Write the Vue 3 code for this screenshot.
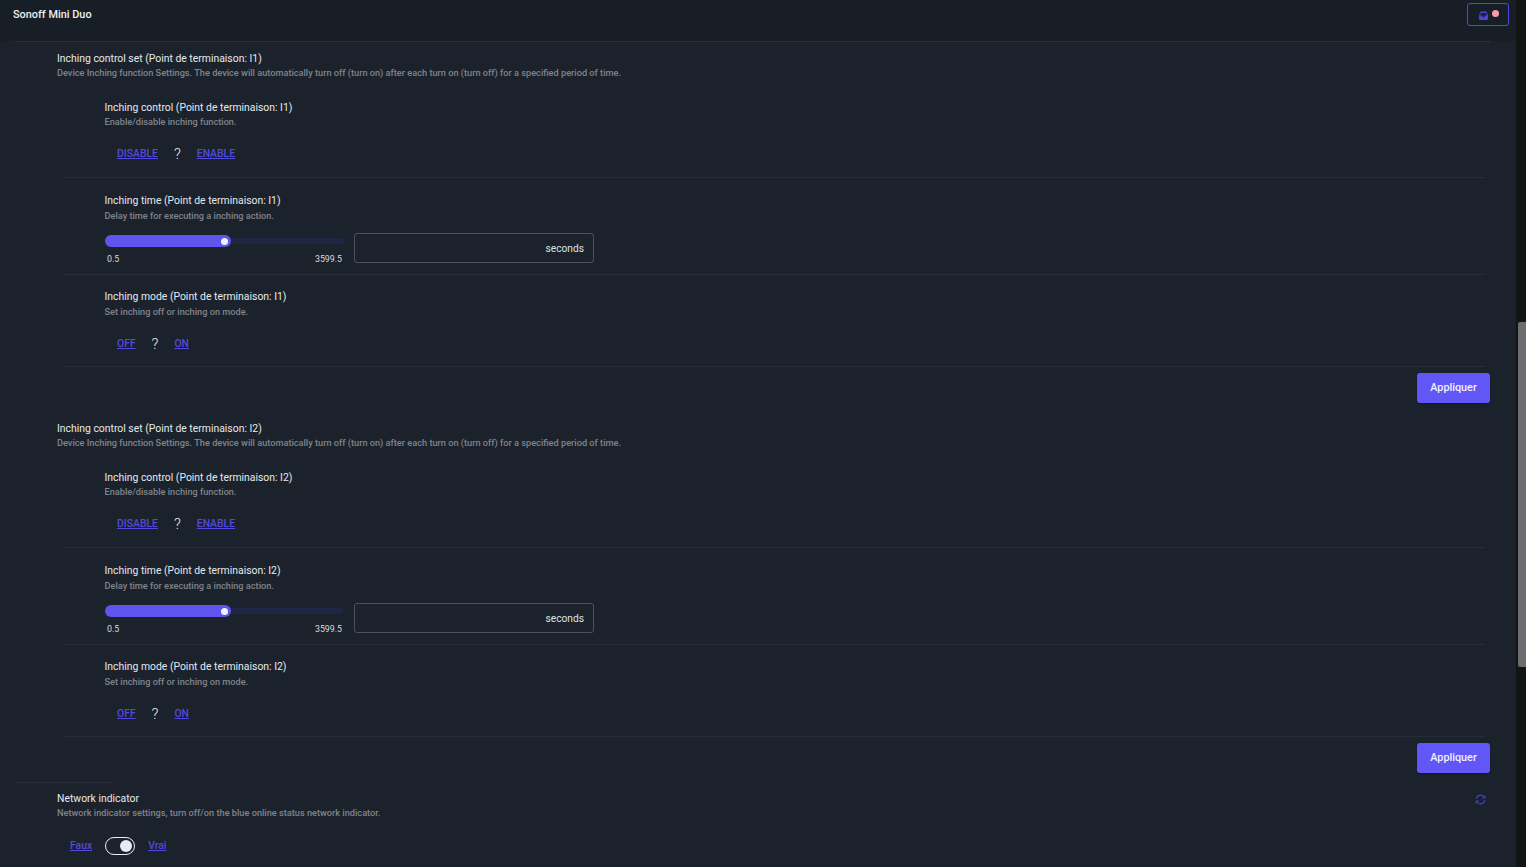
<script setup>
const sections = ['I1', 'I2']
</script>

<template>
  <div class="page">
    <div class="content">
      <header class="topbar">
        <span class="device">Sonoff Mini Duo</span>
        <button class="status">
          <svg width="11" height="11" viewBox="0 0 11 11" class="tray">
            <path d="M2.5 1.5h6l1.5 4v3a1.5 1.5 0 0 1-1.5 1.5h-6A1.5 1.5 0 0 1 1 8.500v-3z" fill="#4c46d8" />
            <path d="M2.800 3h5.400l.8 2.600H7L6.400 7H4.600L4 5.600H2z" fill="#1d2130" />
          </svg>
          <span class="dot"></span>
        </button>
      </header>
      <div class="rule-top"></div>

      <section v-for="id in sections" :key="id" class="group">
        <h2 class="title">Inching control set (Point de terminaison: {{ id }})</h2>
        <p class="desc">Device Inching function Settings. The device will automatically turn off (turn on) after each turn on (turn off) for a specified period of time.</p>

        <div class="subs">
          <div class="sub sub-control">
            <h3 class="title">Inching control (Point de terminaison: {{ id }})</h3>
            <p class="desc">Enable/disable inching function.</p>
            <div class="choice">
              <a class="link">DISABLE</a>
              <span class="unknown">?</span>
              <a class="link">ENABLE</a>
            </div>
          </div>

          <div class="sub sub-time">
            <h3 class="title">Inching time (Point de terminaison: {{ id }})</h3>
            <p class="desc">Delay time for executing a inching action.</p>
            <div class="controls">
              <div class="slider">
                <div class="track">
                  <div class="fill"><span class="handle"></span></div>
                </div>
                <div class="range"><span>0.5</span><span>3599.5</span></div>
              </div>
              <div class="field"><span>seconds</span></div>
            </div>
          </div>

          <div class="sub sub-mode">
            <h3 class="title">Inching mode (Point de terminaison: {{ id }})</h3>
            <p class="desc">Set inching off or inching on mode.</p>
            <div class="choice">
              <a class="link">OFF</a>
              <span class="unknown">?</span>
              <a class="link">ON</a>
            </div>
          </div>
        </div>

        <div class="actions"><button class="apply">Appliquer</button></div>
      </section>

      <section class="network">
        <div class="rule-short"></div>
        <div class="network-head">
          <div>
            <h2 class="title">Network indicator</h2>
            <p class="desc">Network indicator settings, turn off/on the blue online status network indicator.</p>
          </div>
          <svg class="refresh" width="11" height="11" viewBox="0 0 12 12" fill="none" stroke="#4640c0" stroke-width="1.200">
            <path d="M1.500 5.500A4.500 4.500 0 0 1 9.500 3L10.500 4" />
            <path d="M10.800 1.300v3h-3" />
            <path d="M10.500 6.500A4.500 4.500 0 0 1 2.500 9L1.500 8" />
            <path d="M1.200 10.700v-3h3" />
          </svg>
        </div>
        <div class="toggle-row">
          <a class="link">Faux</a>
          <span class="toggle"><span class="knob"></span></span>
          <a class="link">Vrai</a>
        </div>
      </section>
    </div>
    <div class="scrollbar"><div class="thumb"></div></div>
  </div>
</template>

<style>
html, body { margin: 0; background: #1b222c; }
</style>

<style scoped>
.page {
  display: flex;
  width: 1526px;
  height: 867px;
  overflow: hidden;
  background: #1b222c;
  font-family: Roboto, "Noto Sans", sans-serif;
  color: #e6e9ec;
}
.content { flex: 1; min-width: 0; }
.topbar {
  height: 41px;
  box-sizing: border-box;
  padding: 3px 7px 0 13px;
  display: flex;
  justify-content: space-between;
  align-items: flex-start;
  background: #181e26;
}
.device { font-size: 10.900px; font-weight: 500; line-height: 23px; color: #eef0f2; }
.status {
  width: 42px;
  height: 23px;
  padding: 0 10px;
  display: flex;
  align-items: center;
  justify-content: space-between;
  background: transparent;
  border: 1px solid #4f48d8;
  border-radius: 3px;
}
.tray { display: block; margin-top: 2px; }
.dot { width: 7px; height: 7px; border-radius: 50%; background: #f79aaa; margin-top: -3px; margin-right: -1px; }
.rule-top { height: 1px; margin: 0 26px 0 15px; background: #2a313b; }

.group { padding: 9px 26px 0 57px; margin-bottom: 9px; }
.title { margin: 0; font-size: 10.400px; font-weight: 400; line-height: 15px; color: #e6e9ec; }
.desc { margin: 0; font-size: 9.200px; font-weight: 500; line-height: 14px; color: #80848b; }

.subs { margin-left: 7px; margin-right: 5px; }
.sub { padding-left: 40.500px; border-bottom: 1px solid #262d37; }
.sub-control { padding-top: 20px; padding-bottom: 13px; }
.sub-time { padding-top: 15px; padding-bottom: 10px; }
.sub-time .title, .sub-mode .title { margin-bottom: 1px; }
.sub-mode { padding-top: 14px; padding-bottom: 12px; }

.choice {
  display: flex;
  align-items: center;
  height: 20px;
  margin-top: 15px;
  margin-left: 12.500px;
  gap: 16px;
}
.link {
  font-size: 10.400px;
  font-weight: 500;
  color: #524adf;
  text-decoration: underline;
  line-height: 20px;
}
.unknown { font-size: 15px; font-weight: 300; color: #e6e9ec; line-height: 20px; }

.controls { display: flex; gap: 10px; margin-top: 10px; align-items: flex-start; }
.slider { width: 239.500px; }
.track {
  height: 6px;
  margin-top: 5px;
  border-radius: 3px;
  background: #1f2545;
  display: flex;
  align-items: center;
}
.fill {
  position: relative;
  width: 126px;
  height: 12px;
  flex: none;
  border-radius: 6px;
  background: #5f54ee;
}
.handle {
  position: absolute;
  right: 2.500px;
  top: 2.500px;
  width: 7px;
  height: 7px;
  border-radius: 50%;
  background: #f2f2ff;
}
.range {
  display: flex;
  justify-content: space-between;
  margin-top: 9.500px;
  padding: 0 2px 0 2.500px;
  font-size: 8.800px;
  line-height: 10px;
  color: #d8dbde;
}
.field {
  width: 240px;
  height: 30px;
  box-sizing: border-box;
  padding-right: 9px;
  display: flex;
  align-items: center;
  justify-content: flex-end;
  border: 1px solid #4b5059;
  border-radius: 3px;
  font-size: 10.200px;
  color: #dfe2e5;
}

.actions { display: flex; justify-content: flex-end; margin-top: 6.600px; }
.apply {
  width: 73px;
  height: 30px;
  padding: 0 0 2px;
  border: none;
  border-radius: 3px;
  background: #6157f6;
  box-shadow: 0 1px 2px rgba(0, 0, 0, 0.300);
  color: #f1f1ff;
  font-family: Roboto, "Noto Sans", sans-serif;
  font-size: 10.800px;
  font-weight: 500;
}

.network { position: relative; padding: 9px 26px 0 57px; }
.rule-short {
  position: absolute;
  left: 15px;
  top: 0;
  width: 98px;
  height: 1px;
  background: #272e38;
}
.network-head { display: flex; justify-content: space-between; align-items: flex-start; }
.refresh { display: block; margin-top: 3px; margin-right: 4px; }
.toggle-row {
  display: flex;
  align-items: center;
  height: 20px;
  margin-top: 15.500px;
  margin-left: 13px;
  gap: 13px;
}
.toggle {
  width: 30px;
  height: 18px;
  box-sizing: border-box;
  display: flex;
  align-items: center;
  justify-content: flex-end;
  padding-right: 2px;
  border: 1px solid #eceef2;
  border-radius: 9px;
}
.knob { width: 12px; height: 12px; border-radius: 50%; background: #e6e9f8; }

.scrollbar { width: 10px; flex: none; background: #111514; }
.thumb { width: 8px; height: 345px; margin: 322px 0 0 2px; background: #6b6d70; border-radius: 2px 0 0 2px; }
</style>
